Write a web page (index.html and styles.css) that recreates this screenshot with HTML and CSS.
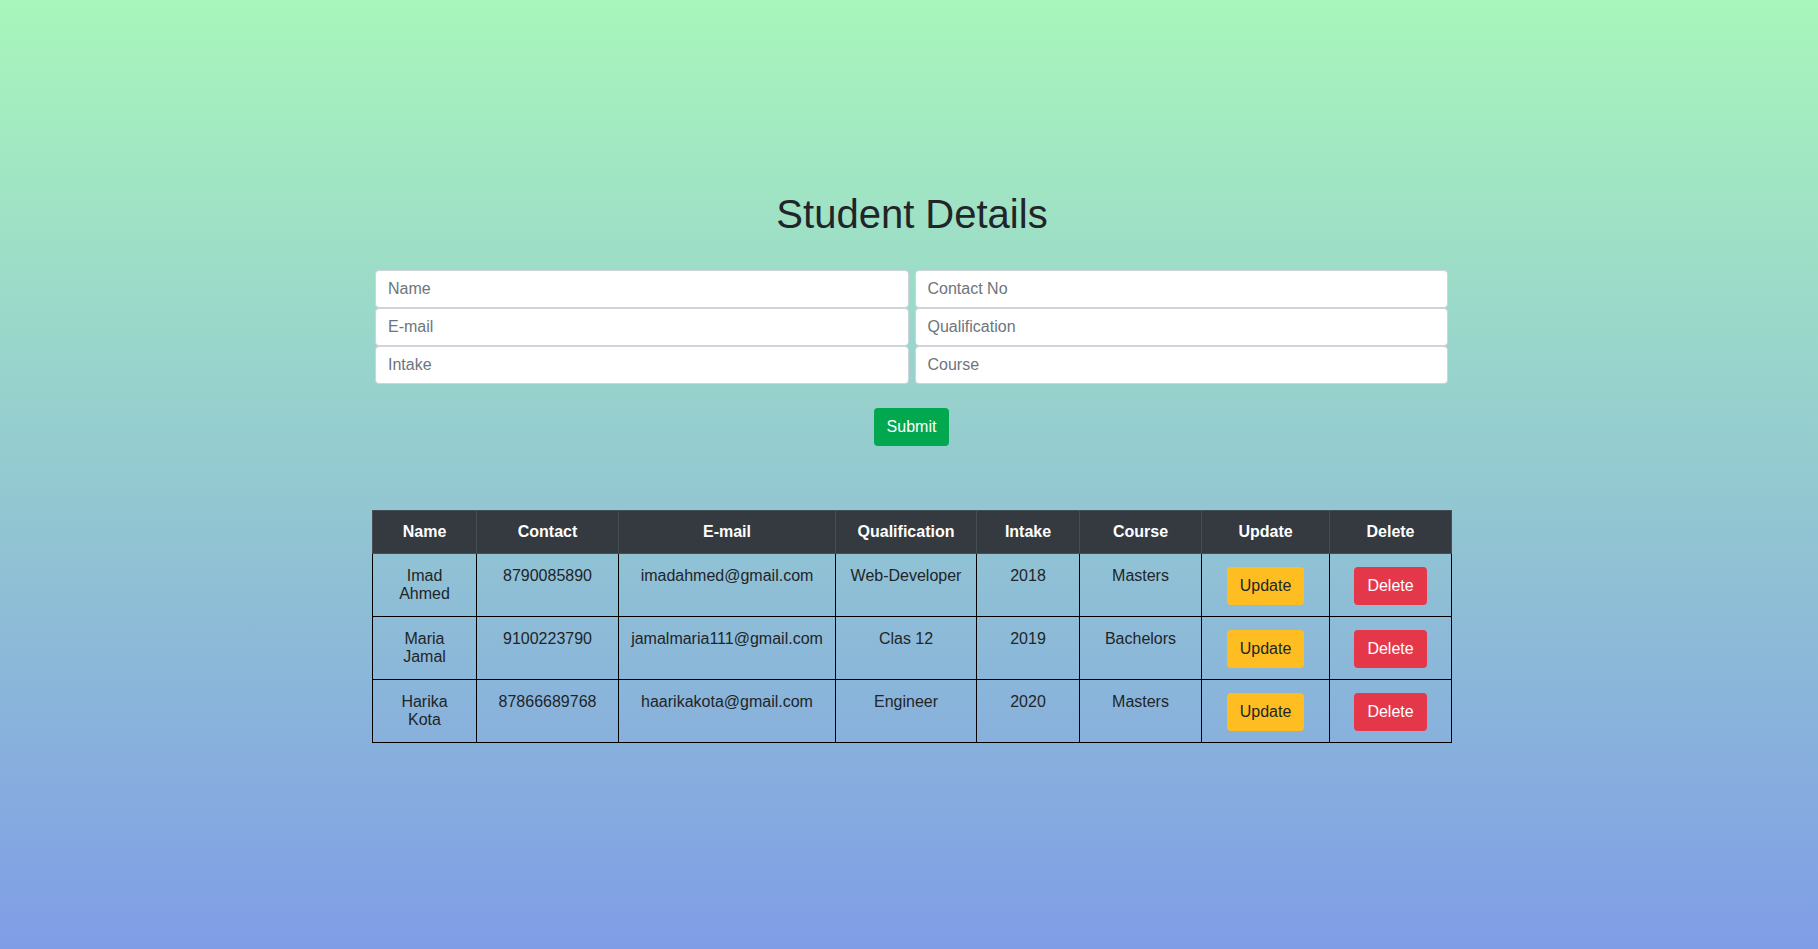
FILE: index.html
```html
<!DOCTYPE html>
<html lang="en">
<head>
<meta charset="utf-8">
<title>Student Details</title>
<link rel="stylesheet" href="styles.css">
</head>
<body>
<main class="page">
  <h1 class="title">Student Details</h1>
  <form class="student-form">
    <div class="fields">
      <input class="field" type="text" placeholder="Name">
      <input class="field" type="text" placeholder="Contact No">
      <input class="field" type="text" placeholder="E-mail">
      <input class="field" type="text" placeholder="Qualification">
      <input class="field" type="text" placeholder="Intake">
      <input class="field" type="text" placeholder="Course">
    </div>
    <div class="actions">
      <button class="btn btn-submit" type="button">Submit</button>
    </div>
  </form>
  <table class="students">
    <thead>
      <tr>
        <th>Name</th><th>Contact</th><th>E-mail</th><th>Qualification</th><th>Intake</th><th>Course</th><th>Update</th><th>Delete</th>
      </tr>
    </thead>
    <tbody>
      <tr>
        <td>Imad Ahmed</td><td>8790085890</td><td>imadahmed@gmail.com</td><td>Web-Developer</td><td>2018</td><td>Masters</td>
        <td><button class="btn btn-update" type="button">Update</button></td>
        <td><button class="btn btn-delete" type="button">Delete</button></td>
      </tr>
      <tr>
        <td>Maria Jamal</td><td>9100223790</td><td>jamalmaria111@gmail.com</td><td>Clas 12</td><td>2019</td><td>Bachelors</td>
        <td><button class="btn btn-update" type="button">Update</button></td>
        <td><button class="btn btn-delete" type="button">Delete</button></td>
      </tr>
      <tr>
        <td>Harika Kota</td><td>87866689768</td><td>haarikakota@gmail.com</td><td>Engineer</td><td>2020</td><td>Masters</td>
        <td><button class="btn btn-update" type="button">Update</button></td>
        <td><button class="btn btn-delete" type="button">Delete</button></td>
      </tr>
    </tbody>
  </table>
</main>
</body>
</html>
```

FILE: styles.css
```css
html, body {
  margin: 0;
  padding: 0;
}

body {
  min-height: 100vh;
  background: linear-gradient(to bottom, #a8f6bb 0%, #7f9de6 100%);
  font-family: "Liberation Sans", Arial, sans-serif;
  font-size: 16px;
  color: #212529;
}

.page {
  width: 1080px;
  margin: 0 auto;
  padding: 190px 0 0 6px;
}

.title {
  margin: 0 0 32px;
  font-size: 40px;
  font-weight: 500;
  line-height: 48px;
  text-align: center;
  color: #212529;
}

.student-form {
  margin: 0 4px 0 3px;
}

.fields {
  display: grid;
  grid-template-columns: 1fr 1fr;
  column-gap: 6px;
}

.field {
  box-sizing: border-box;
  height: 38px;
  width: 100%;
  padding: 6px 12px;
  border: 1px solid #ced4da;
  border-radius: 4px;
  background: #fff;
  font-family: inherit;
  font-size: 16px;
  color: #495057;
}

.field::placeholder {
  color: #6c757d;
}

.actions {
  display: flex;
  justify-content: center;
  margin-top: 24px;
}

.btn {
  box-sizing: border-box;
  height: 38px;
  padding: 6px 12px;
  border: 1px solid transparent;
  border-radius: 4px;
  font-family: inherit;
  font-size: 16px;
  line-height: 24px;
  cursor: pointer;
}

.btn-submit {
  background: #02a84f;
  color: #fff;
}

.btn-update {
  background: #febe22;
  color: #212529;
}

.btn-delete {
  background: #e5374a;
  color: #fff;
}

.students {
  width: 1080px;
  margin-top: 64px;
  border-collapse: collapse;
  table-layout: fixed;
  border: 1px solid #000;
}

.students th,
.students td {
  box-sizing: border-box;
  padding: 12px;
  text-align: center;
  vertical-align: top;
}

.students th {
  background: #343a40;
  color: #fff;
  font-weight: bold;
  border: 1px solid #454d55;
}

.students td {
  padding: 13px 12px 11px;
  border: 1px solid #000;
  color: #212529;
}

.students th:nth-child(1) { width: 104px; }
.students th:nth-child(2) { width: 142px; }
.students th:nth-child(3) { width: 217px; }
.students th:nth-child(4) { width: 141px; }
.students th:nth-child(5) { width: 103px; }
.students th:nth-child(6) { width: 122px; }
.students th:nth-child(7) { width: 128px; }
.students th:nth-child(8) { width: 122px; }
```
